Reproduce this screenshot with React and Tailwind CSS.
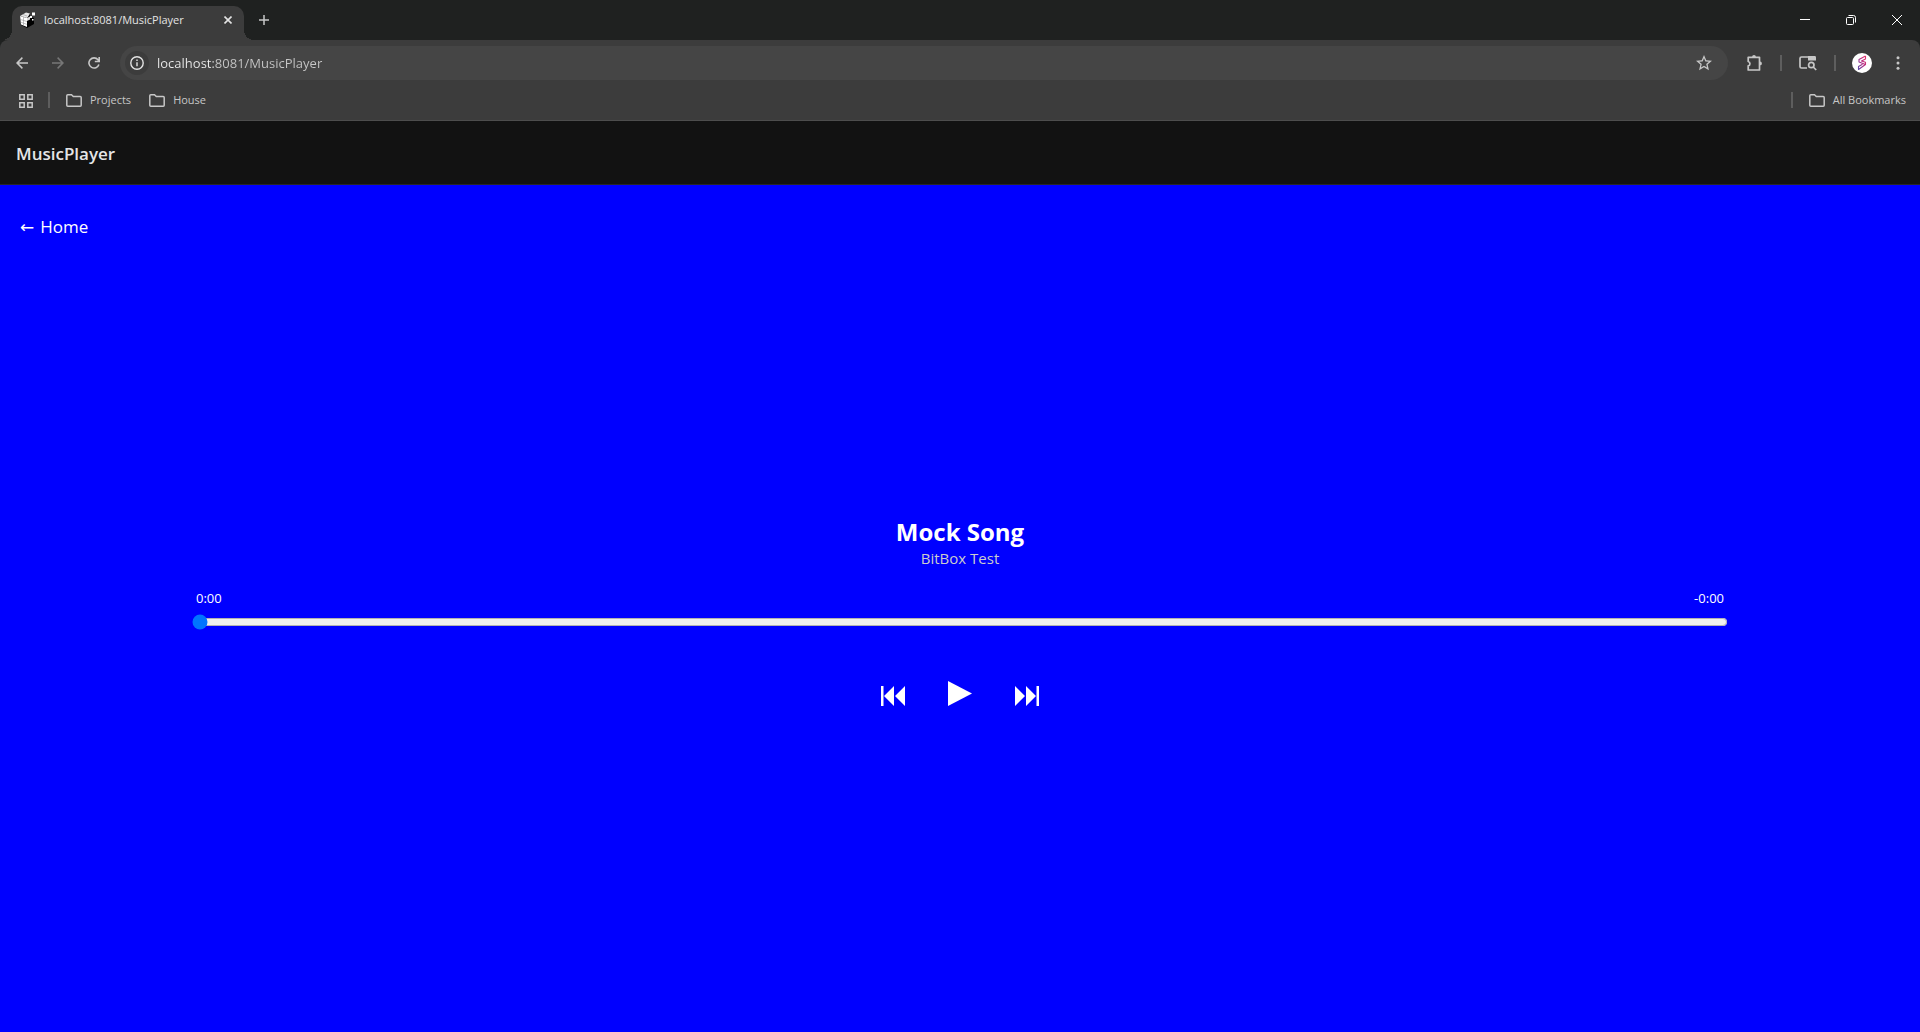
import React, { useState } from "react";

function Icon({ size, children, className = "", viewBox = "0 0 24 24" }) {
  return (
    <svg width={size} height={size} viewBox={viewBox} fill="currentColor" className={"shrink-0 " + className} aria-hidden="true">
      {children}
    </svg>
  );
}

function FolderIcon() {
  return (
    <svg width="16" height="13" viewBox="0 0 16 13" fill="none" stroke="currentColor" strokeWidth="1.5" className="shrink-0" aria-hidden="true">
      <path d="M.8 1.800c0-.6.4-1 1-1h3.700l1.800 1.700h6.900c.6 0 1 .4 1 1v7.700c0 .6-.4 1-1 1H1.800c-.6 0-1-.4-1-1z" />
    </svg>
  );
}

function Favicon() {
  return (
    <svg width="16" height="16" viewBox="0 0 16 16" className="shrink-0" aria-hidden="true">
      <path d="M0 4l7-3 3 1v3l4 1v6l-7 4-6-3z" fill="#000" />
      <path d="M0 4l7 2v9l-6-2.500z" fill="#fff" />
      <path d="M0 4l6-3.500 4 1-1.500 2.500L7 6z" fill="#e8e8e8" />
      <path d="M7 6l3-1.500v3L7 9z" fill="#ddd" />
      <path d="M3.500 4.500v9M.5 7.500l6.500 2M.8 10.200l6.200 2.200M3 2.500l4 1.500" stroke="#999" strokeWidth=".6" fill="none" />
      <path d="M12 .5h3v3h-3zM10 4h2v2h-2zM12 7h1.500v1.500H12z" fill="#fff" />
    </svg>
  );
}

function TabStrip() {
  return (
    <div className="flex h-10 items-end bg-[#1f2120] pl-3">
      <div className="relative flex h-[34px] w-[232px] items-center rounded-t-[10px] bg-[#3c3c3c] pr-2 pb-[6px] pl-2">
        <span className="absolute bottom-0 -left-[10px] size-[10px] bg-[radial-gradient(circle_at_0_0,transparent_10px,#3c3c3c_10px)]" />
        <span className="absolute -right-[10px] bottom-0 size-[10px] bg-[radial-gradient(circle_at_100%_0,transparent_10px,#3c3c3c_10px)]" />
        <Favicon />
        <span className="ml-2 flex-1 text-[11px] leading-4 whitespace-nowrap text-[#e3e3e3]">localhost:8081/MusicPlayer</span>
        <button aria-label="Close tab" className="flex size-4 items-center justify-center text-[#e3e3e3]">
          <svg width="8" height="8" viewBox="0 0 8 8" stroke="currentColor" strokeWidth="1.600"><path d="M.5.5l7 7M7.500.5l-7 7" /></svg>
        </button>
      </div>
      <button aria-label="New tab" className="mb-[10px] ml-[10px] flex size-5 items-center justify-center text-[#c7c7c7]">
        <svg width="10" height="10" viewBox="0 0 10 10" stroke="currentColor" strokeWidth="1.500"><path d="M5 0v10M0 5h10" /></svg>
      </button>
      <div className="ml-auto flex h-10 text-white">
        <button aria-label="Minimize" className="flex w-[46px] items-center justify-center">
          <svg width="10" height="10" viewBox="0 0 10 10" stroke="currentColor"><path d="M0 4.500h10" /></svg>
        </button>
        <button aria-label="Restore" className="flex w-[46px] items-center justify-center">
          <svg width="10" height="10" viewBox="0 0 10 10" stroke="currentColor" fill="none"><rect x=".5" y="2.500" width="7" height="7" rx="1" /><path d="M2.500.5h5a2 2 0 0 1 2 2v5" /></svg>
        </button>
        <button aria-label="Close" className="flex w-[46px] items-center justify-center">
          <svg width="10" height="10" viewBox="0 0 10 10" stroke="currentColor"><path d="M0 0l10 10M10 0L0 10" /></svg>
        </button>
      </div>
    </div>
  );
}

function Divider() {
  return <span className="h-4 w-[2px] bg-[#5e5e5e]" />;
}

function Toolbar() {
  return (
    <div className="flex h-[46px] items-center pr-3 pl-4 text-[#c7c7c7]">
      <button aria-label="Back"><Icon size={12} viewBox="0 0 12 12"><path d="M12 5.200H3L6.900 1.200 5.900.1 0 6l5.900 5.900 1-1.100L3 6.800h9z" /></Icon></button>
      <button aria-label="Forward" className="ml-6 text-[#777777]"><Icon size={12} viewBox="0 0 12 12"><path d="M0 5.200h9L5.100 1.200l1-1.100L12 6l-5.900 5.900-1-1.100L9 6.800H0z" /></Icon></button>
      <button aria-label="Reload" className="ml-6">
        <svg width="12" height="12" viewBox="0 0 12 12" fill="none" stroke="currentColor" strokeWidth="1.600" aria-hidden="true"><path d="M10.900 7.500A5.100 5.100 0 1 1 10 2.700l1 1.300M11.200 0v4.500H6.800" /></svg>
      </button>
      <div className="ml-5 flex h-[34px] flex-1 items-center rounded-full bg-[#454545] pr-4 pl-[5px]">
        <button aria-label="View site information" className="flex size-6 items-center justify-center rounded-full bg-[#3c3c3c] text-[#e3e3e3]">
          <svg width="14" height="14" viewBox="0 0 14 14" fill="none" stroke="currentColor" strokeWidth="1.400"><circle cx="7" cy="7" r="6.200" /><path d="M7 6.200v4M7 3.600v1.500" /></svg>
        </button>
        <input
          aria-label="Address"
          className="ml-2 h-5 min-w-0 flex-1 bg-[linear-gradient(90deg,#ececec_56px,#c7c7c7_56px)] bg-clip-text text-[13px] leading-5 text-transparent caret-white outline-none"
          defaultValue="localhost:8081/MusicPlayer"
        />
        <button aria-label="Bookmark this tab"><Icon size={16} viewBox="2 2 20 20"><path d="M22 9.240l-7.190-.62L12 2 9.190 8.630 2 9.240l5.460 4.730L5.820 21 12 17.270 18.180 21l-1.630-7.030zM12 15.400l-3.760 2.270 1-4.280-3.320-2.880 4.380-.38L12 6.100l1.710 4.040 4.380.38-3.320 2.880 1 4.280z" /></Icon></button>
      </div>
      <button aria-label="Extensions" className="ml-[18px]">
        <svg width="18" height="18" viewBox="0 0 18 18" fill="none" stroke="currentColor" strokeWidth="1.700"><path d="M2.200 3.300h11.300v12.700H2.200v-4.200a2.200 2.200 0 0 0 0-4.300z" strokeLinejoin="round" /><path d="M6.100 3a1.900 1.900 0 0 1 3.800 0zM14 7.500a1.900 1.900 0 0 1 0 3.800z" fill="currentColor" stroke="none" /></svg>
      </button>
      <span className="ml-4 flex"><Divider /></span>
      <button aria-label="Tab search" className="ml-[17px]">
        <svg width="18" height="16" viewBox="0 0 18 16" fill="none" stroke="currentColor" strokeWidth="1.700"><path d="M8 13H2.500C1.500 13 1 12.500 1 11.500v-8C1 2.500 1.500 2 2.500 2H9" /><path d="M9 1h6.500c1 0 1.500.5 1.500 1.500V5.500H9z" fill="currentColor" stroke="none" /><circle cx="12.300" cy="10" r="2.700" /><path d="M14.200 12l3 3" /></svg>
      </button>
      <span className="ml-[17px] flex"><Divider /></span>
      <button aria-label="Profile" className="ml-4">
        <svg width="20" height="20" viewBox="0 0 20 20"><defs><linearGradient id="logo" x1="0" y1="1" x2="1" y2="0"><stop offset="0" stopColor="#5d4ba8" /><stop offset=".5" stopColor="#b02a84" /><stop offset="1" stopColor="#e8356d" /></linearGradient></defs><circle cx="10" cy="10" r="10" fill="#fff" /><path d="M13.500 3L7 6.500v2.500l6.500 2.500L6.500 16.500v-3l4-2.300M13.500 3v3L9.500 8l4 1.200v2.300" fill="none" stroke="url(#logo)" strokeWidth="1.100" strokeLinejoin="round" /></svg>
      </button>
      <button aria-label="Menu" className="ml-4 flex w-5 justify-center">
        <svg width="4" height="14" viewBox="0 0 4 14" fill="currentColor"><circle cx="2" cy="1.700" r="1.500" /><circle cx="2" cy="7" r="1.500" /><circle cx="2" cy="12.300" r="1.500" /></svg>
      </button>
    </div>
  );
}

function BookmarksBar() {
  return (
    <div className="flex h-[35px] items-center border-b border-[#4d4d4d] pr-[14px] pb-[6px] pl-[19px] text-[11px] leading-4 text-[#c7c7c7]">
      <button aria-label="Apps" className="mt-px">
        <svg width="14" height="14" viewBox="0 0 14 14" fill="none" stroke="currentColor" strokeWidth="1.500"><path d="M.8.8h4.400v4.400H.8zM8.800.8h4.400v4.400H8.800zM.8 8.800h4.400v4.400H.8zM8.800 8.800h4.400v4.400H8.800z" /></svg>
      </button>
      <span className="ml-[15px] flex"><Divider /></span>
      <button className="ml-4 flex items-center gap-2"><FolderIcon />Projects</button>
      <button className="ml-[18px] flex items-center gap-2"><FolderIcon />House</button>
      <span className="ml-auto flex"><Divider /></span>
      <button className="ml-4 flex items-center gap-2"><FolderIcon />All Bookmarks</button>
    </div>
  );
}

function Player() {
  const [position, setPosition] = useState(0);
  return (
    <main className="flex flex-1 flex-col bg-[#0000ff] px-5 text-white">
      <a href="#home" className="mt-7 flex items-center gap-[6px] self-start text-[17px] leading-7">
        <span className="font-['DejaVu_Sans',sans-serif]">←</span>
        Home
      </a>
      <section className="mb-[52px] flex flex-1 flex-col items-center justify-center">
        <h2 className="text-[24px] leading-8 font-bold">Mock Song</h2>
        <p className="text-[15px] leading-5 text-[#cccccc]">BitBox Test</p>
        <div className="mt-5 flex w-[80vw] flex-col">
          <div className="flex justify-between px-1 text-[13px] leading-5">
            <span>0:00</span>
            <span>-0:00</span>
          </div>
          <input type="range" aria-label="Song position" min="0" max="100" value={position} onChange={(e) => setPosition(Number(e.target.value))} className="mt-[6px] h-4 w-full accent-[#0075ff]" />
        </div>
        <div className="mt-[51px] flex items-end gap-[43px]">
          <button aria-label="Previous song">
            <svg width="24" height="20" viewBox="0 0 24 20" fill="currentColor"><path d="M0 0h2.500v20H0zM13 0v20L3 10zM24 0v20L14 10z" /></svg>
          </button>
          <button aria-label="Play">
            <svg width="24" height="25" viewBox="0 0 24 25" fill="currentColor"><path d="M0 0l24 12.500L0 25z" /></svg>
          </button>
          <button aria-label="Next song">
            <svg width="24" height="20" viewBox="0 0 24 20" fill="currentColor"><path d="M21.500 0H24v20h-2.500zM0 0l10 10L0 20zM11 0l10 10-10 10z" /></svg>
          </button>
        </div>
      </section>
    </main>
  );
}

export default function App() {
  return (
    <div className="flex min-h-screen flex-col bg-[#0000ff] font-['Open_Sans','Noto_Sans',sans-serif]">
      <div className="bg-[#1f2120]">
        <TabStrip />
        <div className="rounded-t-[8px] bg-[#3c3c3c]">
          <Toolbar />
          <BookmarksBar />
        </div>
      </div>
      <header className="flex h-16 items-center border-b border-[#272729] bg-[#121212] px-4 pt-[2px]">
        <h1 className="text-[17px] font-semibold text-[#e5e5e7]">MusicPlayer</h1>
      </header>
      <Player />
    </div>
  );
}
